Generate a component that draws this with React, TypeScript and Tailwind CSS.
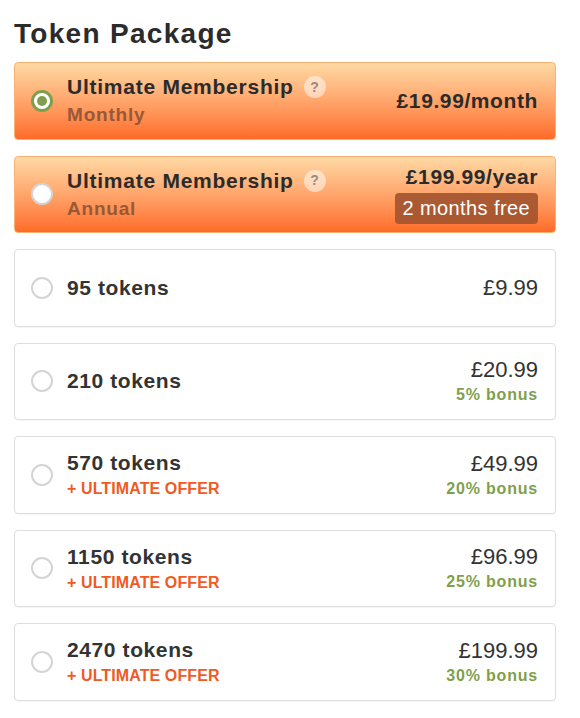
import React from 'react';

type Pkg = {
  tokens: string;
  price: string;
  bonus?: string;
  offer?: boolean;
};

const packages: Pkg[] = [
  { tokens: '95 tokens', price: '£9.99' },
  { tokens: '210 tokens', price: '£20.99', bonus: '5% bonus' },
  { tokens: '570 tokens', price: '£49.99', bonus: '20% bonus', offer: true },
  { tokens: '1150 tokens', price: '£96.99', bonus: '25% bonus', offer: true },
  { tokens: '2470 tokens', price: '£199.99', bonus: '30% bonus', offer: true },
];

function Radio({ checked }: { checked?: boolean }) {
  if (checked) {
    return (
      <span className="flex h-[22px] w-[22px] shrink-0 items-center justify-center rounded-full border-[3px] border-[#7f9f4c] bg-white">
        <span className="h-[10px] w-[10px] rounded-full bg-[#7f9f4c]" />
      </span>
    );
  }
  return <span className="h-[22px] w-[22px] shrink-0 rounded-full border-2 border-[#d4d4d4] bg-white" />;
}

function Help() {
  return (
    <span className="ml-[10px] flex h-[22px] w-[22px] items-center justify-center rounded-full bg-white/50 text-[14px] font-bold text-[#9a8a80]">
      ?
    </span>
  );
}

function MembershipCard({
  plan,
  price,
  checked,
  extra,
}: {
  plan: string;
  price: string;
  checked?: boolean;
  extra?: string;
}) {
  return (
    <div className="flex h-[77.5px] items-center rounded-[4px] border border-[#fbb16f] bg-gradient-to-b from-[#fed9a4] to-[#fd6b25] pl-[16px] pr-[17px]">
      <Radio checked={checked} />
      <div className="ml-[14px] flex flex-col">
        <div className="flex items-center">
          <span className="text-[21px] font-bold leading-[26px] tracking-[0.75px] text-[#2b2b2b]">Ultimate Membership</span>
          <Help />
        </div>
        <span className="mt-[3px] text-[19px] font-bold leading-[24px] tracking-[0.8px] text-[#7a4a30]/80">{plan}</span>
      </div>
      <div className="ml-auto flex flex-col items-end">
        <span className="text-[21px] font-bold leading-[26px] tracking-[0.6px] text-[#2b2b2b]">{price}</span>
        {extra && (
          <span className="mt-[3px] rounded-[4px] bg-[#a2532f]/90 px-[8px] py-[3px] text-[20px] leading-[25px] tracking-[0.4px] text-white">
            {extra}
          </span>
        )}
      </div>
    </div>
  );
}

function TokenCard({ p }: { p: Pkg }) {
  return (
    <div className="flex h-[77.5px] items-center rounded-[4px] border border-[#dedede] bg-white pl-[16px] pr-[17px] shadow-[0_1px_1px_rgba(0,0,0,0.04)]">
      <Radio />
      <div className="ml-[14px] flex flex-col">
        <span className="text-[21px] font-bold leading-[26px] tracking-[0.6px] text-[#333]">{p.tokens}</span>
        {p.offer && (
          <span className="mt-[3px] text-[16px] font-bold leading-[20px] tracking-[0.1px] text-[#f05a24]">+ ULTIMATE OFFER</span>
        )}
      </div>
      <div className="ml-auto flex flex-col items-end">
        <span className="text-[22px] leading-[26px] text-[#333]">{p.price}</span>
        {p.bonus && (
          <span className="mt-[2px] text-[16px] font-bold leading-[20px] tracking-[0.8px] text-[#7f9f4c]">{p.bonus}</span>
        )}
      </div>
    </div>
  );
}

export default function App() {
  return (
    <div className="min-h-screen bg-white px-[14px] pt-[18px] pb-4 font-[family-name:'Liberation_Sans',Arial,sans-serif]">
      <h1 className="mb-[12px] text-[28px] font-bold leading-[32px] tracking-[1.3px] text-[#2b2b2b]">Token Package</h1>
      <div className="flex w-[542px] flex-col gap-4">
        <MembershipCard plan="Monthly" price="£19.99/month" checked />
        <MembershipCard plan="Annual" price="£199.99/year" extra="2 months free" />
        {packages.map((p) => (
          <TokenCard key={p.tokens} p={p} />
        ))}
      </div>
    </div>
  );
}
